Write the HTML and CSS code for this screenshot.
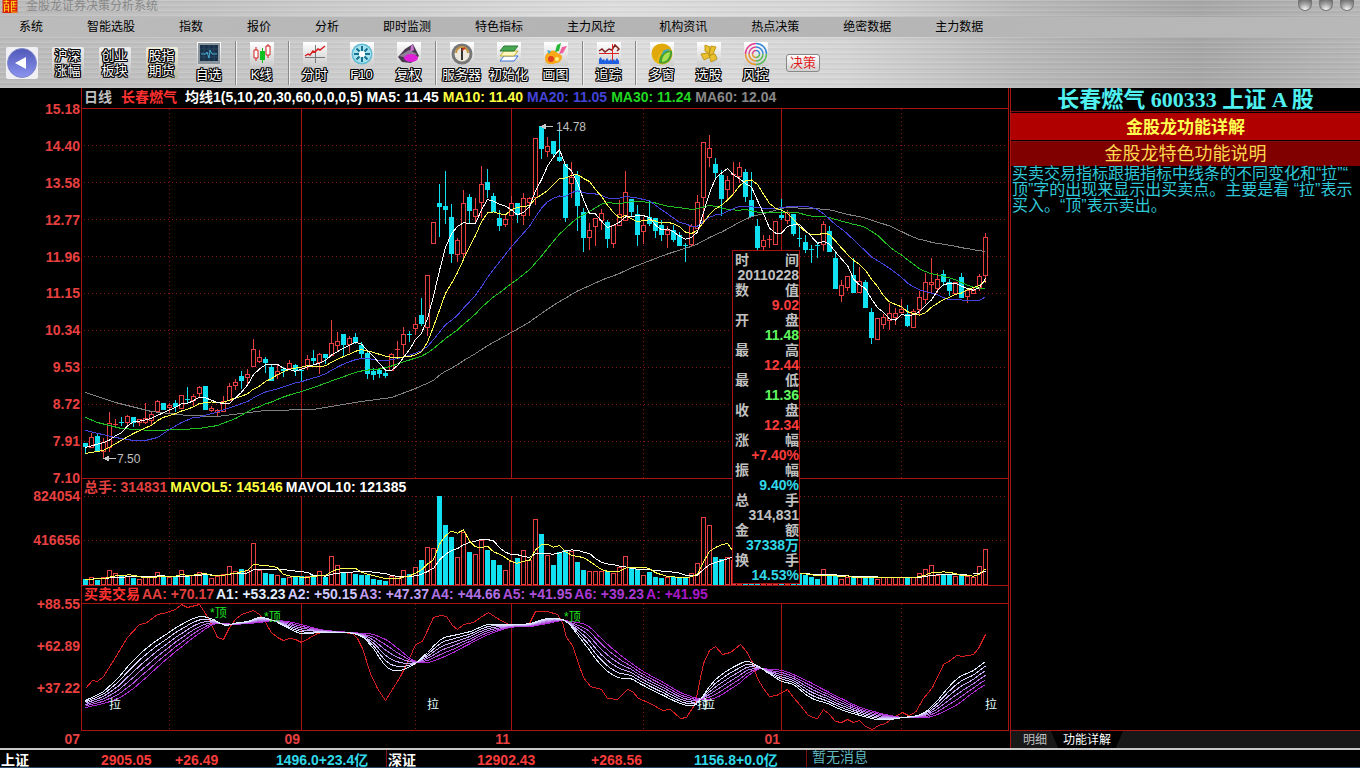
FILE: index.html
```html
<!DOCTYPE html>
<html lang="zh-CN">
  <head>
    <meta charset="UTF-8" />
    <meta name="viewport" content="width=device-width, initial-scale=1.0" />
    <title>金股龙证券决策分析系统</title>
    <link rel="stylesheet" href="styles.css">
  </head>

  <body>
    <header class="titlebar">
      <svg class="logo" viewBox="0 0 16 14">
        <rect width="16" height="14" fill="#d81808" />
        <path d="M1 1.5h6M1 4.5h6M2 7.5h5M1.5 10.5h5.500M2 5v8M6.500 5v8M4 0v4M9 1.500h6M9 4.500h6M9 7.500h6M9 10.500h5M9.500 1v12h6M12 1v6" stroke="#ffd820" fill="none" />
      </svg>
      <span class="title">金股龙证券决策分析系统</span>
      <div class="window-buttons">
        <button aria-label="最小化"></button>
        <button aria-label="最大化"></button>
        <button aria-label="关闭"></button>
      </div>
    </header>

    <nav class="menu">
      <button>系统</button>
      <button>智能选股</button>
      <button>指数</button>
      <button>报价</button>
      <button>分析</button>
      <button>即时监测</button>
      <button>特色指标</button>
      <button>主力风控</button>
      <button>机构资讯</button>
      <button>热点决策</button>
      <button>绝密数据</button>
      <button>主力数据</button>
    </nav>

    <div class="toolbar">
      <button class="tool first" aria-label="返回">
        <svg class="back" viewBox="0 0 32 32">
          <defs>
            <linearGradient id="ball" x1="0" y1="0" x2="0" y2="1">
              <stop offset="0" stop-color="#5058b8" />
              <stop offset="1" stop-color="#8c94f0" />
            </linearGradient>
          </defs>
          <rect width="32" height="32" rx="2" fill="#f0f0f4" />
          <circle cx="16" cy="16" r="14.500" fill="url(#ball)" stroke="#8088c8" />
          <path d="M9 16l11-6v12z" fill="#fff" />
        </svg>
      </button>
      <button class="tool"><span class="square">沪深<br />涨幅</span></button>
      <button class="tool"><span class="square">创业<br />板块</span></button>
      <button class="tool"><span class="square warm">股指<br />期货</span></button>
      <button class="tool">
        <svg class="icon" viewBox="0 0 24 24">
          <rect x="1" y="1" width="22" height="21" fill="#8a949c" />
          <rect x="3" y="3" width="18" height="16" fill="#183048" />
          <path d="M3 7h18M3 11h18M3 15h18M7 3v16M12 3v16M17 3v16" stroke="#284860" fill="none" />
          <path d="M4 12h5l1-2 2 6 1-8 2 4h5" stroke="#48a8d0" fill="none" />
        </svg>
        <span class="label">自选</span>
      </button>
      <i class="sep"></i>
      <button class="tool">
        <svg class="icon" viewBox="0 0 24 24">
          <path d="M6 5v3M6 16v3M18 2v2M18 13v3" stroke="#d02020" fill="none" />
          <path d="M4 8h4v8H4zM16 4h4v9h-4z" stroke="#d02020" fill="#fff" />
          <path d="M10 9h5v9h-5zM12 6h1v15h-1z" fill="#10c020" />
        </svg>
        <span class="label">K线</span>
      </button>
      <i class="sep"></i>
      <button class="tool">
        <svg class="icon" viewBox="0 0 24 24">
          <path d="M12.500 3v18M2 15.500h20" stroke="#777" fill="none" />
          <path d="M2 14l3-2 2 1 3-4 2 1 3-3 2 1 5-4" stroke="#d82020" stroke-width="1.500" fill="none" />
        </svg>
        <span class="label">分时</span>
      </button>
      <button class="tool">
        <svg class="icon" viewBox="0 0 24 24">
          <circle cx="12" cy="12" r="10.500" fill="#60bcd4" />
          <circle cx="12" cy="12" r="9" fill="#a8e4f0" />
          <path d="M12 4v5M12 15v5M4 12h5M15 12h5M6.500 6.500l3 3M14.500 14.500l3 3M17.500 6.500l-3 3M9.500 14.500l-3 3" stroke="#18708c" stroke-width="2" />
          <circle cx="12" cy="12" r="3" fill="#fff" />
        </svg>
        <span class="label">F10</span>
      </button>
      <button class="tool">
        <svg class="icon" viewBox="0 0 24 24">
          <path d="M1 15l7-8 8-5 2 4 4 8-8 7-9-1z" fill="#483850" />
          <path d="M2 14l10-6 8 4-9 4z" fill="#908098" />
          <ellipse cx="14" cy="16" rx="7" ry="4" fill="#e020d8" />
          <path d="M14 4l2-2 1 6-4 2z" fill="#c878d0" />
        </svg>
        <span class="label">复权</span>
      </button>
      <i class="sep"></i>
      <button class="tool">
        <svg class="icon" viewBox="0 0 24 24">
          <circle cx="12" cy="12" r="9" fill="#eee8dc" stroke="#777" stroke-width="3" />
          <path d="M6 11a6 6 0 0 1 12 0" stroke="#c09040" stroke-width="2" fill="none" />
          <path d="M12 6v12" stroke="#333" stroke-width="2" />
          <path d="M12 8l3-2" stroke="#d03020" stroke-width="2" />
        </svg>
        <span class="label">服务器</span>
      </button>
      <button class="tool">
        <svg class="icon" viewBox="0 0 24 24">
          <path d="M3 19l4-5h14l-4 5z" fill="#fff" stroke="#3870d8" />
          <path d="M3 14l4-5h14l-4 5z" fill="#fff8c0" stroke="#c0b030" />
          <path d="M3 9l4-5h14l-4 5z" fill="#48a850" stroke="#287838" />
        </svg>
        <span class="label">初始化</span>
      </button>
      <button class="tool">
        <svg class="icon" viewBox="0 0 24 24">
          <path d="M1 17c0-6 5-10 11-8 1 4 6 2 6 6 0 5-6 7-11 7-4 0-6-2-6-5z" fill="#f8a818" />
          <circle cx="7" cy="17" r="3" fill="#e04020" />
          <circle cx="13" cy="17" r="2" fill="#fff080" />
          <path d="M11 10l2-7 4-2-2 8z" fill="#28b838" />
          <path d="M15 12l3-7 5-1-4 7z" fill="#f0609c" />
          <path d="M3 8l4 1-2 3z" fill="#38a8e0" />
        </svg>
        <span class="label">画图</span>
      </button>
      <i class="sep"></i>
      <button class="tool">
        <svg class="icon" viewBox="0 0 24 24">
          <path d="M2 9l3-2 3 3 4-3 3 1 3-5 4 4-2 2" stroke="#802020" fill="none" stroke-width="1.500" />
          <path d="M2 11.500h20M15.500 2v20" stroke="#e02020" fill="none" />
          <path d="M2 22v-5l2-2 1 3 2-1 1 2 2-3 2 3 2-2 1 2 2-2 1 2 2-3 2 3v3z" fill="#2060e0" />
        </svg>
        <span class="label">追踪</span>
      </button>
      <i class="sep"></i>
      <button class="tool">
        <svg class="icon" viewBox="0 0 24 24">
          <circle cx="12" cy="12" r="10.500" fill="#e8b818" />
          <path d="M4 5c6-5 14-3 17 2-6 0-13 3-14 12C2 16 0 10 4 5z" fill="#e0a808" />
          <path d="M22 9c-7-2-13 3-13 12 7 3 14-3 13-12z" fill="#48a030" />
          <path d="M20 10c-6 1-8 5-8 10 4 0 8-4 8-10z" fill="#a8e050" />
          <path d="M13 9c3-2 6-2 8-1l-5 1-4 4z" fill="#38a8c8" />
        </svg>
        <span class="label">多窗</span>
      </button>
      <button class="tool">
        <svg class="icon" viewBox="0 0 24 24">
          <path d="M13 19l6-6 2 4-4 4z" fill="#c0c8e0" />
          <path d="M8 3l5 2-1 7-4-3zM14 4l5 1-3 7-4 2zM4 12l7-1 2 4-6 3zM12 13l6-1 2 5-6 3z" fill="#e8c030" stroke="#c09818" />
        </svg>
        <span class="label">选股</span>
      </button>
      <button class="tool">
        <svg class="icon" viewBox="0 0 24 24" fill="none" stroke-width="1.500">
          <path d="M1.500 12A10.500 10.500 0 0 1 12 1.500M5 12a7 7 0 0 1 7-7M8.500 12A3.500 3.500 0 0 1 12 8.500" stroke="#e04090" />
          <path d="M12 1.500A10.500 10.500 0 0 1 22.500 12M12 5a7 7 0 0 1 7 7M12 8.500a3.500 3.500 0 0 1 3.500 3.500" stroke="#3888d8" />
          <path d="M22.500 12A10.500 10.500 0 0 1 12 22.500M19 12a7 7 0 0 1-7 7M15.500 12a3.500 3.500 0 0 1-3.500 3.500" stroke="#58b858" />
          <path d="M12 22.500A10.500 10.500 0 0 1 1.500 12M12 19a7 7 0 0 1-7-7M12 15.500A3.500 3.500 0 0 1 8.500 12" stroke="#e89830" />
        </svg>
        <span class="label">风控</span>
      </button>
      <button class="decision">决策</button>
    </div>

    <main>
      <div class="chart">
        <section class="panel price">
          <div class="legend">
            <span class="period">日线</span>
            <span class="stock name-gap">长春燃气</span>
            <span class="white">均线1(5,10,20,30,60,0,0,0,5)</span>
            <span class="white">MA5: 11.45</span>
            <span class="yellow">MA10: 11.40</span>
            <span class="blue">MA20: 11.05</span>
            <span class="green">MA30: 11.24</span>
            <span class="gray">MA60: 12.04</span>
          </div>
          <div class="axis">
            <span>15.18</span><span>14.40</span><span>13.58</span><span>12.77</span><span>11.96</span><span>11.15</span><span>10.34</span><span>9.53</span><span>8.72</span><span>7.91</span><span>7.10</span>
          </div>
          <div class="plot" id="price"></div>
        </section>

        <section class="panel volume">
          <div class="legend">
            <span class="red">总手: 314831</span>
            <span class="yellow">MAVOL5: 145146</span>
            <span class="white">MAVOL10: 121385</span>
          </div>
          <div class="axis"><span>824054</span><span>416656</span></div>
          <div class="plot" id="volume"></div>
        </section>

        <section class="panel signal">
          <div class="legend">
            <span class="stock">买卖交易</span>
            <span class="red">AA: +70.17</span>
            <span class="a1">A1: +53.23</span>
            <span class="a2">A2: +50.15</span>
            <span class="a3">A3: +47.37</span>
            <span class="a4">A4: +44.66</span>
            <span class="a5">A5: +41.95</span>
            <span class="a6">A6: +39.23</span>
            <span class="a7">A: +41.95</span>
          </div>
          <div class="axis"><span>+88.55</span><span>+62.89</span><span>+37.22</span></div>
          <div class="plot" id="signal"></div>
        </section>

        <div class="months">
          <span>07</span><span>09</span><span>11</span><span>01</span>
        </div>

        <dl class="detail">
          <dt><span>时</span><span>间</span></dt>
          <dd>20110228</dd>
          <dt><span>数</span><span>值</span></dt>
          <dd class="up">9.02</dd>
          <dt><span>开</span><span>盘</span></dt>
          <dd class="down">11.48</dd>
          <dt><span>最</span><span>高</span></dt>
          <dd class="up">12.44</dd>
          <dt><span>最</span><span>低</span></dt>
          <dd class="down">11.36</dd>
          <dt><span>收</span><span>盘</span></dt>
          <dd class="up">12.34</dd>
          <dt><span>涨</span><span>幅</span></dt>
          <dd class="up">+7.40%</dd>
          <dt><span>振</span><span>幅</span></dt>
          <dd class="cyan">9.40%</dd>
          <dt><span>总</span><span>手</span></dt>
          <dd>314,831</dd>
          <dt><span>金</span><span>额</span></dt>
          <dd class="cyan">37338万</dd>
          <dt><span>换</span><span>手</span></dt>
          <dd class="cyan">14.53%</dd>
        </dl>
      </div>

      <aside>
        <h1>长春燃气 600333 上证 A 股</h1>
        <h2>金股龙功能详解</h2>
        <h3>金股龙特色功能说明</h3>
        <p>
          买卖交易指标跟据指标中线条的不同变化和“拉”“<br />
          顶”字的出现来显示出买卖点。主要是看 “拉”表示<br />
          买入。“顶”表示卖出。
        </p>
        <div class="tabs">
          <button class="tab">明细</button>
          <button class="tab active">功能详解</button>
        </div>
      </aside>
    </main>

    <footer>
      <div class="index sh">
        <span class="name">上证</span>
        <span class="up">2905.05</span>
        <span class="up">+26.49</span>
        <span class="cyan">1496.0+23.4亿</span>
      </div>
      <div class="index sz">
        <span class="name">深证</span>
        <span class="up">12902.43</span>
        <span class="up">+268.56</span>
        <span class="cyan">1156.8+0.0亿</span>
      </div>
      <div class="news">暂无消息</div>
    </footer>

    <script src="chart.js"></script>
  </body>
</html>
```
FILE: chart.js
```js
const LEFT = 82;
const WIDTH = 926;
const FIRST = 85;
const STEP = 6;

// one row per day: direction (1 up, 0 down), body top, body bottom, high, low
const days = [
  [0,443,446,443,452],[1,437,447,433,447],[0,436,450,434,451],[1,442,451,438,458],[1,423,447,412,451],
  [1,424,424,419,427],[0,422,422,417,425],[1,416,422,415,424],[0,417,422,417,426],[1,419,422,419,425],
  [1,418,422,403,423],[1,414,420,412,424],[1,401,411,400,411],[0,403,409,403,409],[1,405,407,403,413],
  [0,403,406,400,411],[1,395,408,395,408],[0,399,399,387,402],[1,396,400,394,405],[1,387,393,386,396],
  [0,386,409,386,409],[1,408,410,406,411],[1,410,412,409,416],[1,401,411,396,411],[1,386,400,383,400],
  [1,382,385,379,389],[0,376,380,371,388],[1,374,377,369,384],[1,349,366,339,366],[1,357,361,350,362],
  [0,359,362,357,372],[0,367,380,365,380],[1,371,374,365,378],[0,369,370,367,376],[1,363,368,360,368],
  [0,365,370,364,375],[0,370,370,370,380],[1,359,365,355,369],[0,358,360,350,364],[1,354,362,353,373],
  [0,354,357,354,363],[1,343,355,320,355],[1,341,345,332,350],[0,334,344,334,356],[1,338,344,336,352],
  [0,337,342,333,343],[0,345,353,342,357],[0,353,373,350,378],[0,371,374,368,379],[0,370,373,368,377],
  [0,373,375,370,377],[1,354,370,353,370],[1,349,349,341,358],[1,334,344,327,354],[0,334,334,331,341],
  [1,324,328,317,334],[0,315,323,298,325],[1,275,327,275,335],[1,222,243,222,243],[0,203,206,184,236],
  [0,206,209,171,223],[0,217,253,204,262],[1,240,254,238,261],[1,203,253,190,258],[0,197,210,194,223],
  [1,209,216,198,221],[1,184,202,166,217],[0,182,189,169,197],[0,196,211,193,211],[0,218,225,210,230],
  [1,219,224,214,226],[1,203,215,196,215],[0,203,214,203,222],[1,198,215,193,224],[1,198,202,197,215],
  [1,138,197,138,204],[0,126,148,126,158],[1,146,151,137,156],[0,141,153,141,156],[0,157,160,127,161],
  [0,164,217,164,221],[1,177,183,162,197],[0,175,205,171,230],[0,212,237,208,251],[1,230,237,223,249],
  [1,218,226,218,245],[1,213,220,209,229],[0,222,238,220,247],[1,225,243,225,247],[1,214,225,200,225],
  [1,192,220,171,220],[0,199,211,199,215],[0,214,234,205,245],[1,225,231,217,243],[0,217,223,201,225],
  [0,218,230,218,237],[0,225,234,220,240],[1,230,234,226,247],[0,230,239,225,241],[0,235,245,232,245],
  [0,245,245,243,261],[1,226,244,224,245],[1,202,228,195,228],[1,142,197,142,223],[1,148,157,135,166],
  [0,164,172,158,178],[0,175,198,170,215],[1,180,189,176,198],[1,174,174,162,194],[1,167,176,162,182],
  [0,172,196,169,201],[0,200,216,172,216],[0,226,247,219,250],[1,240,246,235,250],[1,239,239,235,247],
  [1,221,244,221,244],[0,215,217,199,219],[1,212,220,210,223],[0,214,233,214,235],[0,238,238,227,246],
  [0,242,249,235,252],[0,249,249,245,262],[0,245,245,242,257],[1,224,244,221,250],[0,231,251,226,251],
  [0,258,288,253,288],[1,285,295,280,301],[1,276,287,276,290],[0,275,292,258,292],[1,281,292,267,292],
  [0,282,307,280,307],[0,312,337,308,343],[1,318,339,318,339],[1,317,324,314,328],[1,313,320,303,329],
  [1,313,317,308,324],[1,309,312,299,312],[0,314,325,305,326],[1,311,327,309,327],[1,297,309,291,314],
  [1,282,299,273,303],[1,282,284,258,293],[1,279,288,273,292],[0,274,281,270,285],[0,282,290,279,295],
  [1,282,293,282,293],[0,277,297,273,297],[1,290,296,288,302],[1,290,293,288,293],[1,276,287,274,290],
  [1,237,275,233,282]
];

const volumes = [
  579,577,580,577,570,573,576,576,578,579,576,577,572,576,577,576,570,575,575,572,
  574,578,576,574,566,571,569,570,543,570,573,574,575,578,577,577,576,576,575,571,
  577,556,565,572,572,574,575,575,579,580,581,576,576,570,574,567,560,547,548,496,
  525,537,557,532,552,554,540,550,560,565,570,561,558,550,560,519,534,555,565,552,
  550,551,562,570,571,571,571,571,573,567,556,568,569,575,572,577,578,577,577,577,
  577,573,563,517,525,557,559,557,560,566,570,572,572,574,574,572,573,573,573,573,
  575,577,579,569,576,576,579,577,577,577,577,577,579,577,577,577,577,577,577,573,
  569,565,575,575,575,576,574,576,577,566,549
];

// averages before enough days are on screen
const heads = {
  5: [[0,447],[3,442]],
  10: [[0,453],[3,450],[8,433]],
  20: [[0,430],[5,437],[8,440],[10,440],[12,437],[14,429],[16,422],[18,417]],
  30: [[0,417],[2,422],[6,428],[11,430],[16,429],[19,428],[22,425],[25,418],[28,408]],
  60: [[0,392],[5,402],[11,411],[17,415],[22,416],[26,413],[30,410],[38,409],[46,401],[51,397],[55,388],[58,380]]
};

const aa = [
  [85,688],[92,680],[97,681],[103,676],[115,657],[127,637],[139,624],[145,623],[157,614],[163,613],
  [169,611],[175,609],[181,604],[187,607],[199,604],[205,613],[211,624],[217,637],[223,639],[229,627],
  [235,619],[241,614],[253,610],[259,614],[265,622],[271,632],[277,637],[283,640],[289,638],[295,639],
  [301,642],[317,633],[327,631],[340,632],[352,633],[357,638],[362,648],[370,673],[377,688],[385,700],
  [400,676],[409,658],[415,644],[422,641],[427,630],[433,617],[440,615],[446,616],[452,625],[457,629],
  [463,624],[473,622],[480,617],[488,612],[497,618],[508,624],[520,625],[529,623],[535,611],[547,611],
  [557,614],[562,622],[566,637],[572,645],[577,660],[583,677],[590,686],[601,689],[607,698],[617,699],
  [627,689],[632,691],[638,698],[650,703],[662,710],[670,709],[680,718],[686,717],[695,703],[698,687],
  [703,663],[709,650],[715,646],[722,654],[730,652],[740,644],[746,651],[752,662],[757,678],[763,688],
  [769,696],[776,695],[787,689],[793,697],[800,705],[807,714],[812,717],[817,718],[823,709],[829,714],
  [835,721],[841,722],[847,719],[853,722],[859,720],[865,726],[872,729],[878,725],[885,723],[893,717],
  [902,712],[908,715],[915,712],[923,698],[932,687],[943,664],[950,660],[956,655],[962,656],[973,654],
  [978,648],[985,634]
];

// x, fast line, slow line; the other four lie between them
const band = [
  [85,700,707],[103,691,703],[118,677,698],[133,660,688],[147,647,676],[167,633,658],[183,623,645],
  [200,616,632],[213,619,624],[220,623,623],[227,625,623],[233,623,624],[247,621,623],[260,617,622],
  [273,620,620],[287,627,621],[301,633,624],[320,632,629],[337,632,631],[353,633,632],[363,637,633],
  [373,648,634],[387,667,640],[400,670,650],[415,663,661],[427,652,662],[442,638,657],[453,635,652],
  [470,631,643],[488,624,634],[510,624,627],[530,623,626],[547,618,623],[562,619,620],[570,625,621],
  [587,647,625],[603,667,640],[618,677,653],[630,678,662],[643,685,671],[663,695,682],[680,703,692],
  [688,705,695],[697,703,698],[710,685,699],[720,675,695],[740,663,682],[748,661,675],[760,667,668],
  [770,674,669],[782,681,670],[793,684,674],[810,697,682],[827,703,691],[843,710,699],[860,715,707],
  [877,719,712],[890,719,715],[903,717,717],[917,715,717],[927,710,717],[937,700,714],[957,678,704],
  [973,670,692],[985,661,684]
];
const bandColors = ["#e0ecff", "#d8d0ff", "#c8a8f4", "#b87ce8", "#b450dc", "#b028d4"];

const bottomMarks = [[109,698],[427,698],[697,698],[703,698],[985,698]];
const topMarks = [[210,606],[264,610],[564,610]];

const solid = [301, 511, 781];
const dotted = [169, 415, 643, 901];

function dayX(i) {
  return FIRST + STEP * i;
}

function polyline(points, color) {
  const list = points.map((p) => (p[0] + 0.5) + "," + (p[1] + 0.5)).join(" ");
  return `<polyline points="${list}" stroke="${color}" />`;
}

function line(x1, y1, x2, y2, name) {
  return `<path class="${name}" d="M${x1} ${y1}L${x2} ${y2}" />`;
}

function interpolate(points, i) {
  for (let k = 1; k < points.length; k++) {
    const a = points[k - 1];
    const b = points[k];
    if (i <= b[0]) return a[1] + ((b[1] - a[1]) * (i - a[0])) / (b[0] - a[0]);
  }
  return points[points.length - 1][1];
}

function average(values, n, head) {
  return values.map((v, i) => {
    if (i < n - 1) return [dayX(i), interpolate(head, i)];
    let sum = 0;
    for (let k = i - n + 1; k <= i; k++) sum += values[k];
    return [dayX(i), sum / n];
  });
}

// smooth curve through the points
function curve(points, color) {
  let d = `M${points[0][0] + 0.5} ${points[0][1] + 0.5}`;
  for (let i = 0; i < points.length - 1; i++) {
    const p0 = points[i - 1] || points[i];
    const p1 = points[i];
    const p2 = points[i + 1];
    const p3 = points[i + 2] || p2;
    const c = (p2[0] - p1[0]) / 3;
    const m1 = (p2[1] - p0[1]) / (p2[0] - p0[0]);
    const m2 = (p3[1] - p1[1]) / (p3[0] - p1[0]);
    d += `C${p1[0] + c} ${p1[1] + m1 * c + 0.5} ${p2[0] - c} ${p2[1] - m2 * c + 0.5} ${p2[0] + 0.5} ${p2[1] + 0.5}`;
  }
  return `<path d="${d}" stroke="${color}" />`;
}

function grid(top, bottom, rows) {
  let out = "";
  rows.forEach((y) => (out += line(84, y + 0.5, 1006, y + 0.5, "dots")));
  dotted.forEach((x) => (out += line(x + 0.5, top, x + 0.5, bottom, "dots")));
  solid.forEach((x) => (out += line(x + 0.5, top, x + 0.5, bottom, "rule")));
  return out;
}

function draw(id, top, height, content) {
  document.getElementById(id).innerHTML =
    `<svg viewBox="${LEFT} ${top} ${WIDTH} ${height}" preserveAspectRatio="none">${content}</svg>`;
}

function mark(id, top, height, x, y, name, text) {
  const el = document.createElement("span");
  el.className = "mark " + name;
  el.textContent = text;
  el.style.left = ((x - LEFT) / WIDTH) * 100 + "%";
  el.style.top = ((y - top) / height) * 100 + "%";
  document.getElementById(id).appendChild(el);
}

function bar(x, top, bottom, up) {
  if (bottom - top < 1) return `<path class="${up ? "up" : "down"}" d="M${x - 2} ${top + 0.5}h5" />`;
  if (up) return `<rect class="up" x="${x - 1.5}" y="${top + 0.5}" width="4" height="${bottom - top}" />`;
  return `<rect class="fill" x="${x - 2}" y="${top}" width="5" height="${bottom - top + 1}" />`;
}

function drawPrice() {
  let out = grid(109, 478, [145, 182, 219, 256, 293, 330, 367, 404, 441]);
  days.forEach(([up, top, bottom, high, low], i) => {
    const x = dayX(i);
    const name = up ? "up" : "down";
    const flat = bottom - top < 1;
    if (flat) out += line(x + 0.5, high, x + 0.5, low + 1, name);
    if (!flat && high < top) out += line(x + 0.5, high, x + 0.5, top, name);
    if (!flat && low > bottom) out += line(x + 0.5, bottom, x + 0.5, low + 1, name);
    out += bar(x, top, bottom, up);
  });
  const close = days.map((d) => (d[0] ? d[1] : d[2]));
  out += polyline(average(close, 60, heads[60]), "#808080");
  out += polyline(average(close, 30, heads[30]), "#20c020");
  out += polyline(average(close, 20, heads[20]), "#4444dc");
  out += polyline(average(close, 10, heads[10]), "#ffff50");
  out += polyline(average(close, 5, heads[5]), "#ffffff");
  out += '<path class="arrow" d="M104 458.500h12M104 458.500l4-2v4zM541 126.500h12M541 126.500l4-2v4z" />';
  draw("price", 109, 369, out);
  mark("price", 109, 369, 117, 452, "value", "7.50");
  mark("price", 109, 369, 556, 120, "value", "14.78");
}

function drawVolume() {
  let out = grid(496, 585, [496, 540]);
  volumes.forEach((v, i) => (out += bar(dayX(i), v, 584, days[i][0])));
  out += polyline(average(volumes, 10, [[0, 579], [8, 576]]), "#ffffff");
  out += polyline(average(volumes, 5, [[0, 579], [3, 578]]), "#ffff50");
  draw("volume", 496, 89, out);
}

function drawSignal() {
  let out = grid(604, 730, []);
  out += polyline(aa, "#d82020");
  for (let n = 5; n >= 0; n--) {
    out += curve(band.map((b) => [b[0], b[1] + ((b[2] - b[1]) * n) / 5]), bandColors[n]);
  }
  draw("signal", 604, 126, out);
  bottomMarks.forEach(([x, y]) => mark("signal", 604, 126, x, y, "buy", "拉"));
  topMarks.forEach(([x, y]) => mark("signal", 604, 126, x, y, "sell", "*顶"));
}

drawPrice();
drawVolume();
drawSignal();
```
FILE: styles.css
```css
* {
  box-sizing: border-box;
}

body {
  margin: 0;
  height: 100vh;
  display: flex;
  flex-direction: column;
  overflow: hidden;
  background-color: #000;
  color: #c0c0c0;
  font: 12px/16px "Liberation Sans", "Noto Sans CJK SC", sans-serif;
}

button {
  border: none;
  padding: 0;
  background: none;
  font: inherit;
  color: inherit;
  cursor: pointer;
}

.titlebar,
.toolbar {
  background:
    repeating-linear-gradient(rgba(255,255,255,0.1) 0 1px, rgba(0,0,0,0.03) 1px 3px, transparent 3px 5px),
    linear-gradient(90deg, #bcbcbc 0, #c4c4c4 15%, #dedede 45%, #d6d6d6 62%, #bababa 75%, #a8a8a8 88%, #b8b8b8 100%);
}

.titlebar {
  display: flex;
  height: 17px;
  padding: 0 6px 0 2px;
  overflow: hidden;
}

.logo {
  width: 16px;
  height: 13px;
}

.title {
  margin-left: 8px;
  line-height: 12px;
  color: #888;
}

.window-buttons {
  display: flex;
  gap: 7px;
  margin-left: auto;
}

.window-buttons button {
  width: 14px;
  height: 11px;
  border: 1px solid #777;
  border-top: none;
  border-radius: 0 0 7px 7px;
  background: radial-gradient(circle at 50% 100%, #fff, #999 60%, #666);
}

.menu {
  display: flex;
  gap: 44px;
  height: 20px;
  padding-left: 19px;
  background: linear-gradient(90deg, #bcbcbc, #b4b4b4 40%, #b8b8b8);
  color: #000;
}

/* toolbar */

.toolbar {
  display: flex;
  align-items: center;
  height: 51px;
}

.tool {
  width: 47px;
  height: 42px;
  display: flex;
  flex-direction: column;
  align-items: center;
  justify-content: center;
}

.tool.first {
  width: 44px;
}

.back {
  width: 32px;
  height: 32px;
}

.icon {
  width: 24px;
  height: 24px;
  flex: none;
  background: linear-gradient(#fff, #ccc);
}

.label,
.square {
  color: #fff;
  font-size: 13px;
  line-height: 15px;
  white-space: nowrap;
  text-shadow: 1px 0 #000, -1px 0 #000, 0 1px #000, 0 -1px #000, 1px 1px #000, -1px -1px #000, 1px -1px #000, -1px 1px #000;
}

.label {
  height: 18px;
  line-height: 18px;
}

.square {
  width: 32px;
  height: 32px;
  padding-top: 1px;
  border-radius: 2px;
  background: linear-gradient(#eee, #bbb);
}

.square.warm {
  background: linear-gradient(#eeeedc, #b8b8a0);
}

.sep {
  width: 1px;
  height: 44px;
  margin: 0 2px 0 3px;
  background-color: #888;
  box-shadow: 1px 0 #eee;
}

.decision {
  width: 34px;
  height: 18px;
  margin-left: 7px;
  border: 1px solid #888;
  border-radius: 3px;
  background: linear-gradient(#fff, #d0d0d0);
  color: #e01818;
  font-size: 13px;
  line-height: 15px;
}

/* charts */

main {
  flex: 1;
  min-height: 0;
  display: flex;
}

.chart {
  flex: 1;
  min-width: 0;
  margin-right: 1px;
  position: relative;
  display: flex;
  flex-direction: column;
}

.panel {
  display: grid;
  grid-template-columns: 81px 1fr;
  min-height: 0;
}

.price {
  flex: 390 1 0;
  grid-template-rows: 21px 1fr;
}

.volume {
  flex: 107 1 0;
  grid-template-rows: 18px 1fr;
}

.signal {
  flex: 145 1 0;
  grid-template-rows: 19px 1fr;
}

.legend {
  grid-column: 2;
  display: flex;
  gap: 4px;
  padding-left: 2px;
  border-left: 1px solid #a81414;
  border-right: 1px solid #a81414;
  font-size: 14px;
  font-weight: bold;
  line-height: 19px;
  white-space: nowrap;
  overflow: hidden;
}

.price .legend {
  border-bottom: 1px solid #a81414;
}

.volume .legend {
  gap: 3px;
  border-top: 1px solid #a81414;
  line-height: 17px;
}

.signal .legend {
  gap: 2px;
  border-top: 1px solid #a81414;
  border-bottom: 1px solid #a81414;
  line-height: 17px;
}

.period {
  margin-right: 5px;
}

.name-gap {
  margin-right: 4px;
}

.axis {
  display: flex;
  flex-direction: column;
  justify-content: space-between;
  margin: -9px 1px -9px 0;
  color: #e84040;
  font-size: 14px;
  font-weight: bold;
  line-height: 18px;
  text-align: right;
}

.volume .axis {
  margin-bottom: 36px;
}

.signal .axis {
  margin-bottom: 33px;
}

.plot {
  position: relative;
  min-height: 0;
  border-left: 1px solid #a81414;
  border-right: 1px solid #a81414;
}

.plot svg {
  display: block;
  width: 100%;
  height: 100%;
  fill: none;
  shape-rendering: crispEdges;
}

.rule {
  stroke: #a81414;
}

.dots {
  stroke: #8c1414;
  stroke-dasharray: 1 3;
}

rect.up {
  fill: #000;
  stroke: #e84040;
}

path.up {
  stroke: #e84040;
}

path.down {
  stroke: #10e0f0;
}

.fill {
  fill: #10e0f0;
}

.arrow {
  stroke: #c8c8c8;
  fill: #c8c8c8;
}

.mark {
  position: absolute;
  line-height: 15px;
  white-space: nowrap;
}

.buy {
  color: #e0ffff;
}

.sell {
  color: #20e020;
}

.value {
  color: #c0c0c0;
}

.months {
  display: grid;
  grid-template-columns: 81px 220fr 210fr 270fr 228fr;
  flex: none;
  height: 18px;
  color: #e84040;
  font-size: 14px;
  font-weight: bold;
  line-height: 18px;
  text-align: right;
  background: linear-gradient(#a81414, #a81414) 81px 0 / 100% 1px no-repeat;
}

.months span {
  padding-right: 1px;
}

.white { color: #fff; }
.yellow { color: #ffff40; }
.blue { color: #4444d8; }
.green { color: #20d820; }
.gray { color: #888; }
.red { color: #e04040; }
.stock { color: #ff3030; }
.up { color: #f83c3c; }
.down { color: #60f860; }
.cyan { color: #30d8e8; }
.a1 { color: #e0ecff; }
.a2 { color: #d0c8ff; }
.a3 { color: #c09cf0; }
.a4 { color: #b070e4; }
.a5 { color: #ac50d8; }
.a6 { color: #a838d0; }
.a7 { color: #a818c8; }

/* values of the selected day, over the chart */

.detail {
  position: absolute;
  top: 162px;
  left: 732px;
  width: 68px;
  margin: 0;
  padding: 2px 0 0 2px;
  border: 1px solid #a81414;
  background-color: #000;
  font-size: 14px;
  font-weight: bold;
  line-height: 15px;
}

.detail dt {
  display: flex;
  justify-content: space-between;
}

.detail dd {
  margin: 0;
  text-align: right;
}

/* right column */

aside {
  flex: 0 0 350px;
  display: flex;
  flex-direction: column;
  border-left: 1px solid #a81414;
  text-align: center;
}

aside h1 {
  margin: 0;
  height: 24px;
  border-bottom: 1px solid #801010;
  color: #50f0f0;
  font: bold 22px/24px "Liberation Serif", "Noto Sans CJK SC", serif;
}

aside h2 {
  margin: 1px 0 0;
  height: 27px;
  background-color: #b00000;
  color: #ffff50;
  font-size: 17px;
  line-height: 30px;
}

aside h3 {
  margin: 1px 0 0;
  height: 25px;
  border-top: 1px solid #801010;
  background-color: #800000;
  color: #ffd850;
  font-size: 18px;
  font-weight: normal;
  line-height: 25px;
}

aside p {
  flex: 1;
  margin: 0;
  padding: 0 1px;
  color: #30c8d8;
  font-size: 16px;
  line-height: 16px;
  text-align: left;
  white-space: nowrap;
}

.tabs {
  display: flex;
  height: 18px;
  border-top: 1px solid #a81414;
  background-color: #181818;
}

.tab {
  width: 40px;
  padding-left: 8px;
}

.tab.active {
  width: 72px;
  padding: 0 10px;
  background-color: #000;
  color: #fff;
  white-space: nowrap;
  clip-path: polygon(0 0, 100% 0, 90% 100%, 10% 100%);
}

/* status bar */

footer {
  display: flex;
  height: 20px;
  border-top: 2px solid #c8c8c8;
  border-bottom: 1px solid #284868;
  font-size: 14px;
  line-height: 20px;
  white-space: nowrap;
  overflow: hidden;
}

.index {
  display: grid;
  font-weight: bold;
  border-right: 1px solid #801010;
}

.sh {
  width: 387px;
  grid-template-columns: 101px 74px 101px 1fr;
}

.sz {
  width: 420px;
  grid-template-columns: 90px 114px 103px 1fr;
}

.name {
  padding-left: 1px;
  color: #fff;
}

.news {
  padding-left: 5px;
  line-height: 15px;
  color: #60b8c0;
}
```
